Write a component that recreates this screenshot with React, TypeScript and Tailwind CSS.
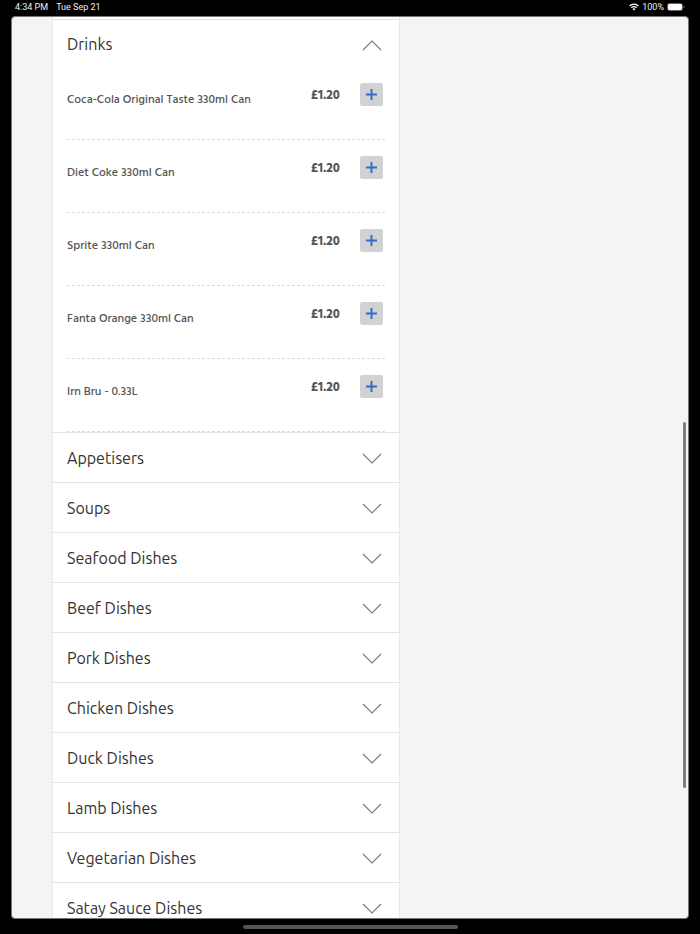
import { useState } from "react";

const drinks = [
  { name: "Coca-Cola Original Taste 330ml Can", price: "£1.20" },
  { name: "Diet Coke 330ml Can", price: "£1.20" },
  { name: "Sprite 330ml Can", price: "£1.20" },
  { name: "Fanta Orange 330ml Can", price: "£1.20" },
  { name: "Irn Bru - 0.33L", price: "£1.20" },
];

const categories = [
  "Appetisers",
  "Soups",
  "Seafood Dishes",
  "Beef Dishes",
  "Pork Dishes",
  "Chicken Dishes",
  "Duck Dishes",
  "Lamb Dishes",
  "Vegetarian Dishes",
  "Satay Sauce Dishes",
];

const Chevron = ({ up = false }: { up?: boolean }) => (
  <svg
    className={up ? "mt-0.5 h-3 w-5 rotate-180" : "mt-0.5 h-3 w-5"}
    viewBox="0 0 20 12"
    fill="none"
    stroke="#777"
    strokeWidth="1.1"
    aria-hidden="true"
  >
    <path d="M1 1 L10 10 L19 1" />
  </svg>
);

const StatusBar = () => (
  <header className="flex h-4 shrink-0 items-center justify-between pr-[15px] pl-[15px] font-['Roboto',sans-serif] text-[9px] leading-none text-[#f0f0f0]">
    <div className="flex gap-2 pb-0.5">
      <span>4:34 PM</span>
      <span>Tue Sep 21</span>
    </div>
    <div className="flex items-center gap-[3px] pb-0.5">
      <svg className="h-2 w-2.5" viewBox="0 0 20 15" fill="none" stroke="#fff" strokeWidth="2.6" aria-hidden="true">
        <path d="M1.2 5.6 C6 0.4 14 0.4 18.8 5.6" />
        <path d="M4.6 9.2 C7.6 6 12.4 6 15.4 9.2" />
        <path d="M10 14.6 L6.9 11.4 C8.6 9.7 11.4 9.7 13.1 11.4 Z" fill="#fff" stroke="none" />
      </svg>
      <span>100%</span>
      <svg className="h-2 w-[18px]" viewBox="0 0 18 8" aria-hidden="true">
        <rect x="0.5" y="0.5" width="15" height="7" rx="2" fill="none" stroke="#666" />
        <rect x="1" y="1" width="14" height="6" rx="1.2" fill="#fff" />
        <path d="M16.5 2.8 C17.8 3.2 17.8 4.8 16.5 5.2 Z" fill="#777" />
      </svg>
    </div>
  </header>
);

const App = () => {
  const [open, setOpen] = useState(true);

  return (
    <div className="flex h-screen flex-col overflow-hidden bg-black font-['Ubuntu','Noto_Sans',sans-serif]">
      <StatusBar />

      <main className="relative mr-[11px] ml-[11px] min-h-0 flex-1 overflow-hidden rounded-[4px] border border-[#777] bg-[#f4f4f4]">
        <div className="ml-10 w-full max-w-[348px] border-x border-[#e7e7e7] bg-white pt-0.5">
          <section className="border-t border-[#e4e4e4]">
            <h2>
              <button
                type="button"
                aria-expanded={open}
                onClick={() => setOpen(!open)}
                className="flex h-[47px] w-full items-center justify-between pt-px pr-[17px] pl-3.5 text-left text-base text-[#333]"
              >
                Drinks
                <Chevron up={open} />
              </button>
            </h2>
            {open && (
              <ul className="mr-3.5 ml-3.5">
                {drinks.map((item) => (
                  <li
                    key={item.name}
                    className="flex h-[73px] items-start border-b border-dashed border-[#dcdcdc] pt-4 pr-0.5 font-['Hind','Lato',sans-serif] leading-[26px] text-[#555]"
                  >
                    <span className="min-w-0 flex-1 pt-1 text-[12px] font-medium">{item.name}</span>
                    <span className="mr-5 text-[13px] font-bold">{item.price}</span>
                    <button
                      type="button"
                      aria-label={`Add ${item.name}`}
                      className="flex h-[23px] w-[23px] items-center justify-center rounded-[2px] bg-[#d2d2d2]"
                    >
                      <svg className="h-[11px] w-[11px]" viewBox="0 0 11 11" stroke="#2a6fc9" strokeWidth="1.9" aria-hidden="true">
                        <path d="M5.5 0 V11 M0 5.5 H11" />
                      </svg>
                    </button>
                  </li>
                ))}
              </ul>
            )}
          </section>

          {categories.map((category) => (
            <section key={category} className="border-t border-[#e4e4e4]">
              <h2>
                <button
                  type="button"
                  aria-expanded={false}
                  className="flex h-[49px] w-full items-center justify-between pr-[17px] pl-3.5 text-left text-base text-[#333]"
                >
                  {category}
                  <Chevron />
                </button>
              </h2>
            </section>
          ))}
        </div>

        {/* scroll thumb */}
        <div className="absolute top-[45%] right-0.5 h-[366px] w-[3px] rounded-full bg-[#7d7d7d]" />
      </main>

      <footer className="flex h-[15px] shrink-0 items-center justify-center">
        <div className="h-1 w-[215px] rounded-full bg-[#555]" />
      </footer>
    </div>
  );
};

export default App;
